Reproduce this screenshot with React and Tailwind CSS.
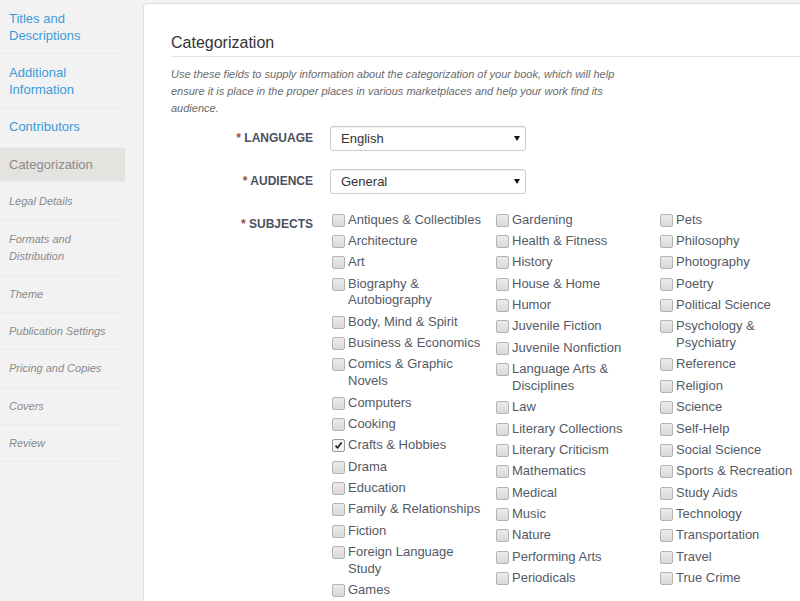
import React from "react";

const nav = [
  { label: ["Titles and", "Descriptions"], kind: "link", cls: "h-[54px] pt-[10px]" },
  { label: ["Additional", "Information"], kind: "link", cls: "h-[54px] pt-[10px]" },
  { label: ["Contributors"], kind: "link", cls: "h-[40px] pt-[10px]" },
  { label: ["Categorization"], kind: "active", cls: "h-[34px] pt-[8px]" },
  { label: ["Legal Details"], kind: "muted", cls: "h-[38px] pt-[11px]" },
  { label: ["Formats and", "Distribution"], kind: "muted", cls: "h-[56px] pt-[11px]" },
  { label: ["Theme"], kind: "muted", cls: "h-[37px] pt-[10px]" },
  { label: ["Publication Settings"], kind: "muted", cls: "h-[37px] pt-[10px]" },
  { label: ["Pricing and Copies"], kind: "muted", cls: "h-[38px] pt-[10px]" },
  { label: ["Covers"], kind: "muted", cls: "h-[37px] pt-[10px]" },
  { label: ["Review"], kind: "muted", cls: "h-[37px] pt-[10px]" },
];

const cols = [
  [
    "Antiques & Collectibles",
    "Architecture",
    "Art",
    "Biography & Autobiography",
    "Body, Mind & Spirit",
    "Business & Economics",
    "Comics & Graphic Novels",
    "Computers",
    "Cooking",
    "Crafts & Hobbies",
    "Drama",
    "Education",
    "Family & Relationships",
    "Fiction",
    "Foreign Language Study",
    "Games",
  ],
  [
    "Gardening",
    "Health & Fitness",
    "History",
    "House & Home",
    "Humor",
    "Juvenile Fiction",
    "Juvenile Nonfiction",
    "Language Arts & Disciplines",
    "Law",
    "Literary Collections",
    "Literary Criticism",
    "Mathematics",
    "Medical",
    "Music",
    "Nature",
    "Performing Arts",
    "Periodicals",
  ],
  [
    "Pets",
    "Philosophy",
    "Photography",
    "Poetry",
    "Political Science",
    "Psychology & Psychiatry",
    "Reference",
    "Religion",
    "Science",
    "Self-Help",
    "Social Science",
    "Sports & Recreation",
    "Study Aids",
    "Technology",
    "Transportation",
    "Travel",
    "True Crime",
  ],
];

function Box({ checked }) {
  return (
    <span
      className={
        "mt-[2px] ml-[2px] mr-[3px] flex h-[13px] w-[13px] shrink-0 items-center justify-center rounded-[2px] border " +
        (checked
          ? "border-[#9a9a9a] bg-[#f4f4f4]"
          : "border-[#b3b3b3] bg-gradient-to-b from-[#ececec] to-[#d9d9d9]")
      }
    >
      {checked && (
        <svg width="9" height="9" viewBox="0 0 9 9">
          <path d="M1.5 4.6 L3.6 6.8 L7.6 1.6" fill="none" stroke="#222" strokeWidth="1.7" />
        </svg>
      )}
    </span>
  );
}

function Label({ children, className = "" }) {
  return (
    <div
      className={
        "w-[142px] shrink-0 text-right text-[12px] font-bold uppercase leading-[17px] text-[#4b5160] " +
        className
      }
    >
      <span className="text-[#9b4a47]">*</span> {children}
    </div>
  );
}

function Select({ value }) {
  return (
    <div className="ml-[17px] flex h-[25px] w-[196px] items-center justify-between rounded-[3px] border border-[#cccccc] bg-white pl-[10px] pr-[5px] text-[13px] text-[#333] shadow-[inset_0_1px_1px_rgba(0,0,0,0.06)]">
      <span>{value}</span>
      <svg width="6" height="5" viewBox="0 0 6 5">
        <path d="M0 0 H6 L3 5 Z" fill="#111" />
      </svg>
    </div>
  );
}

export default function App() {
  return (
    <div
      className="flex h-[601px] w-[800px] overflow-hidden bg-[#f2f2f2]"
      style={{ fontFamily: '"Liberation Sans", Arial, sans-serif' }}
    >
      <div className="w-[125px] shrink-0">
        {nav.map((n, i) => (
          <div
            key={i}
            className={
              "box-border border-b border-[#ebebeb] pl-[9px] pr-2 leading-[17px] " +
              n.cls +
              " " +
              (n.kind === "link"
                ? "text-[13px] text-[#3b9ad9]"
                : n.kind === "active"
                ? "bg-[#e4e3df] text-[13px] text-[#8a8a8a]"
                : "text-[11px] italic text-[#8a8a8a]")
            }
          >
            {n.label.map((l, j) => (
              <div key={j}>{l}</div>
            ))}
          </div>
        ))}
      </div>
      <div className="ml-[18px] mt-[3px] min-w-0 flex-1 rounded-tl-[4px] border-l border-t border-[#dedede] bg-white pl-[27px] pt-[29px]">
        <div className="border-b border-[#e2e2e2] pb-[3px] text-[16px] leading-[20px] text-[#333]">
          Categorization
        </div>
        <p className="mt-[9px] w-[450px] text-[11px] italic leading-[17px] text-[#6b6b6b]">
          Use these fields to supply information about the categorization of your book, which will help
          <br />
          ensure it is place in the proper places in various marketplaces and help your work find its
          <br />
          audience.
        </p>
        <div className="mt-[9px] flex items-center">
          <Label>Language</Label>
          <Select value="English" />
        </div>
        <div className="mt-[18px] flex items-center">
          <Label>Audience</Label>
          <Select value="General" />
        </div>
        <div className="mt-[17.67px] flex">
          <Label className="pt-[4px]">Subjects</Label>
          <div className="ml-[17px] flex shrink-0">
            {cols.map((c, ci) => (
              <div key={ci} className="flex w-[164px] shrink-0 flex-col gap-[4.7px]">
                {c.map((s) => (
                  <div key={s} className="flex items-start">
                    <Box checked={s === "Crafts & Hobbies"} />
                    <span className="w-[138px] text-[13px] leading-[16.67px] text-[#545a66]">{s}</span>
                  </div>
                ))}
              </div>
            ))}
          </div>
        </div>
      </div>
    </div>
  );
}
